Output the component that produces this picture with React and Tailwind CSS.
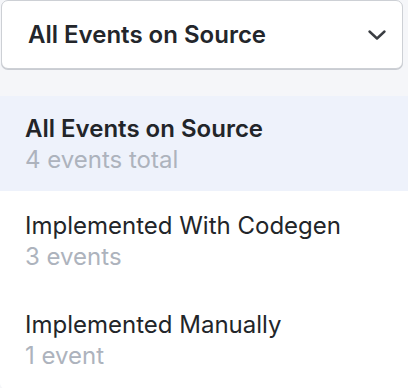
export default function App() {
  const items = [
    { title: "All Events on Source", sub: "4 events total", active: true, h: "h-[95px]" },
    { title: "Implemented With Codegen", sub: "3 events", h: "h-[100px]" },
    { title: "Implemented Manually", sub: "1 event", h: "h-[98px]" },
  ];
  return (
    <div
      className="w-[408px] h-[388px] overflow-hidden bg-[#f5f6f9] flex flex-col"
      style={{ fontFamily: "Inter, 'Noto Sans', sans-serif" }}
    >
      <div className="ml-[1px] mr-[5px] h-[69px] shrink-0 rounded-[7px] border border-[#cdd0d5] bg-white shadow-[0_1px_0_#c9ccd2] flex items-center justify-between pl-[26px] pr-[15px]">
        <span className="text-[24px] font-semibold text-[#23262b]">All Events on Source</span>
        <svg width="20" height="12" viewBox="0 0 20 12" fill="none" stroke="#3a3d42" strokeWidth="2.4" strokeLinecap="round" strokeLinejoin="round">
          <path d="M2.5 2.5L10 9.5L17.5 2.5" />
        </svg>
      </div>
      <div className="mt-[27px] flex-1 bg-white rounded-l-[6px] flex flex-col">
        {items.map((it, i) => (
          <div
            key={i}
            className={`${it.h} shrink-0 flex flex-col justify-center pl-[25px] ${it.active ? "bg-[#eef2fb]" : ""}`}
          >
            <div className={`text-[24px] leading-[31px] text-[#222529] ${it.active ? "font-semibold" : "font-normal"}`}>
              {it.title}
            </div>
            <div className="text-[24px] leading-[31px] text-[#adb3bd]">{it.sub}</div>
          </div>
        ))}
      </div>
    </div>
  );
}
